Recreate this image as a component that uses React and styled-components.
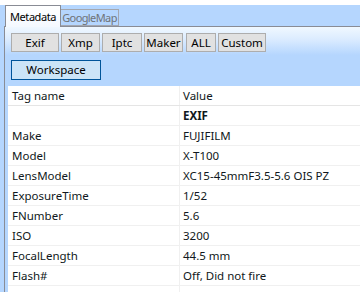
import React from "react";
import styled, { createGlobalStyle } from "styled-components";

const Global = createGlobalStyle`
  html, body { margin: 0; padding: 0; }
  body {
    width: 360px; height: 292px; overflow: hidden;
    background: #b5d6fe;
    font-family: "Noto Sans", "DejaVu Sans", sans-serif;
    font-size: 11.5px;
    color: #111;
  }
`;

const Window = styled.div`
  width: 360px;
  height: 292px;
  display: flex;
  flex-direction: column;
  overflow: hidden;
`;

const TopStrip = styled.div`
  height: 5px;
  background: #ffffff;
  flex: none;
`;

const TabStrip = styled.div`
  display: flex;
  align-items: flex-end;
  height: 22px;
  padding-left: 5px;
  margin-bottom: -1px;
  position: relative;
  z-index: 1;
`;

const Tab = styled.div`
  box-sizing: border-box;
  width: ${(p) => p.$w}px;
  height: ${(p) => (p.$active ? "22px" : "17px")};
  margin-bottom: ${(p) => (p.$active ? "0" : "1px")};
  padding-top: ${(p) => (p.$active ? "3px" : "0")};
  border: 1px solid ${(p) => (p.$active ? "#898c95" : "#a3a7b0")};
  border-bottom: ${(p) => (p.$active ? "none" : "1px solid #a3a7b0")};
  border-left: ${(p) => (p.$active ? "1px solid #898c95" : "none")};
  background: ${(p) =>
    p.$active ? "linear-gradient(#ffffff, #f4f9ff)" : "#b5d6fe"};
  color: ${(p) => (p.$active ? "#000" : "#6f7378")};
  font-size: 11px;
  letter-spacing: ${(p) => (p.$active ? "-0.45px" : "-0.6px")};
  text-align: center;
  line-height: 15px;
  white-space: nowrap;
  overflow: hidden;
`;

const Pane = styled.div`
  flex: 1;
  margin-left: 4px;
  border-top: 1px solid #898c95;
  border-left: 1px solid #898c95;
  background: linear-gradient(#f0f8ff 0px, #dcecff 12px, #b5d6fe 28px);
  display: flex;
  flex-direction: column;
`;

const ButtonRow = styled.div`
  display: flex;
  gap: 2px;
  padding-left: 6px;
  margin-top: ${(p) => p.$top || "0"};
`;

const Button = styled.button`
  box-sizing: border-box;
  width: ${(p) => p.$w}px;
  height: ${(p) => p.$h || 19}px;
  margin-right: ${(p) => p.$mr || 0}px;
  padding: 0;
  font-family: inherit;
  font-size: 11.5px;
  color: #000;
  background: ${(p) => (p.$primary ? "#cce4f7" : "#e1e1e1")};
  border: 1px solid ${(p) => (p.$primary ? "#005499" : "#adadad")};
  border-radius: 0;
  line-height: 16px;
`;

const Table = styled.div`
  margin: 6px 0 0 3px;
  background: #ffffff;
  flex: 1;
`;

const Row = styled.div`
  display: grid;
  grid-template-columns: 172px 1fr;
  height: 19px;
  border-bottom: 1px solid ${(p) => (p.$header ? "#e5e5e5" : "#f0f0f0")};
  line-height: 19px;
`;

const Cell = styled.div`
  padding-left: ${(p) => (p.$first ? "4px" : "3px")};
  border-right: ${(p) => (p.$first ? "1px solid #f0f0f0" : "none")};
  font-weight: ${(p) => (p.$bold ? 700 : 400)};
  white-space: nowrap;
  overflow: hidden;
  color: #101820;
`;

const rows = [
  ["", "EXIF", true],
  ["Make", "FUJIFILM"],
  ["Model", "X-T100"],
  ["LensModel", "XC15-45mmF3.5-5.6 OIS PZ"],
  ["ExposureTime", "1/52"],
  ["FNumber", "5.6"],
  ["ISO", "3200"],
  ["FocalLength", "44.5 mm"],
  ["Flash#", "Off, Did not fire"],
  ["", ""],
];

export default function App() {
  return (
    <Window>
      <Global />
      <TopStrip />
      <TabStrip>
        <Tab $active $w={56}>Metadata</Tab>
        <Tab $w={58}>GoogleMap</Tab>
      </TabStrip>
      <Pane>
        <ButtonRow $top="6px">
          <Button $w={48}>Exif</Button>
          <Button $w={39}>Xmp</Button>
          <Button $w={40}>Iptc</Button>
          <Button $w={39} $mr={1}>Maker</Button>
          <Button $w={30}>ALL</Button>
          <Button $w={48}>Custom</Button>
        </ButtonRow>
        <ButtonRow $top="8px">
          <Button $w={90} $h={20} $primary>Workspace</Button>
        </ButtonRow>
        <Table>
          <Row $header>
            <Cell $first>Tag name</Cell>
            <Cell>Value</Cell>
          </Row>
          {rows.map(([k, v, b], i) => (
            <Row key={i}>
              <Cell $first>{k}</Cell>
              <Cell $bold={b}>{v}</Cell>
            </Row>
          ))}
        </Table>
      </Pane>
    </Window>
  );
}
